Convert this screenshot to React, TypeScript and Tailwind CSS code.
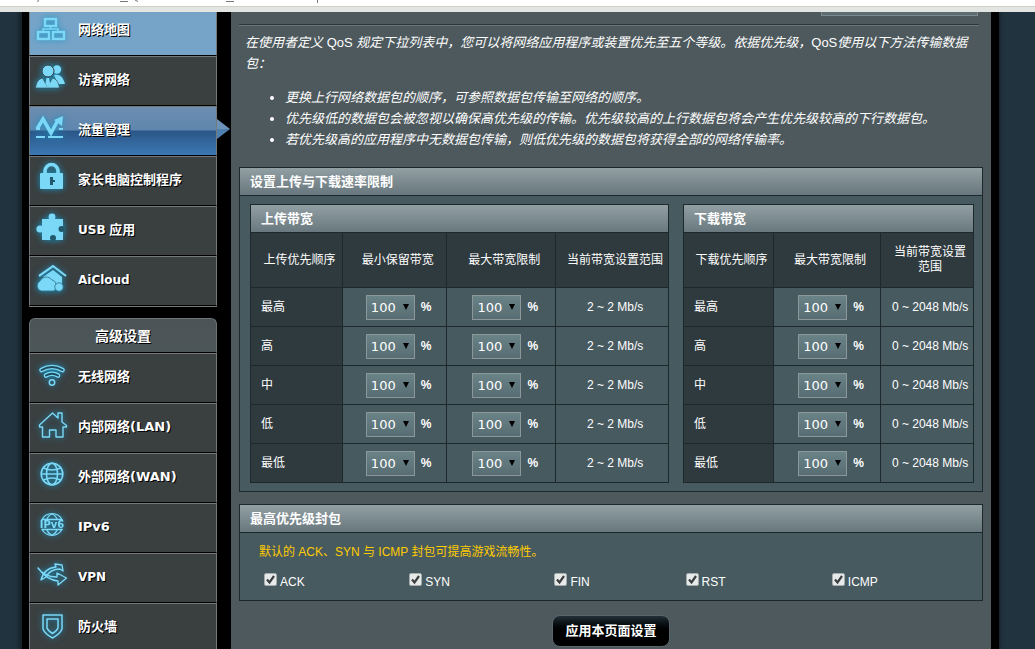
import { useState, type ReactNode } from 'react';
import clsx from 'clsx';

type MenuItem = {
  label: ReactNode;
  icon: ReactNode;
  state?: 'hover' | 'active';
};

const C = '#7bd8f6';
const DARK = '#3a3f40';

const icons = {
  map: (
    <g fill="none" stroke={C} strokeWidth="2.4">
      <rect x="10" y="4" width="11" height="7" />
      <rect x="3" y="17" width="11" height="7" />
      <rect x="18" y="17" width="11" height="7" />
      <path d="M15.5 11v3M8 17v-3h15v3" strokeWidth="1.6" />
    </g>
  ),
  guest: (
    <g fill={C}>
      <circle cx="22" cy="4.5" r="4.2" />
      <path d="M19 10c6-1 9 2 11 9h-7z" />
      <circle cx="13" cy="6" r="6" stroke={DARK} strokeWidth="1" />
      <path
        d="M.5 23c1-6 3-9 7-10l5 9 5-9c4 1 6 4 7 10z"
        stroke={DARK}
        strokeWidth=".6"
      />
      <path d="M11.5 13h2.600l1 6-2.300 3.500-2.300-3.500z" />
    </g>
  ),
  traffic: (
    <g fill="none" stroke={C}>
      <path d="M2 14 8 4l8 14 7-13" strokeWidth="3.6" />
      <path d="m19 5 9-4-1 10z" fill={C} stroke="none" />
      <path d="M1 14h4M24 14h4M1 22h9M13 22h15" strokeWidth="2.200" />
    </g>
  ),
  lock: (
    <g>
      <path d="M10 9V6a6.500 6.500 0 0 1 13 0v3" fill="none" stroke={C} strokeWidth="3.600" />
      <rect x="5" y="8" width="23" height="16" rx="1" fill={C} />
      <path d="M15 12h3v3h2v2h-2v3h-3z" fill="#23586b" />
    </g>
  ),
  usb: (
    <g>
      <path d="M7 4h21v21H7z" fill={C} />
      <circle cx="17" cy="2" r="3.400" fill={C} />
      <circle cx="5" cy="14" r="3.600" fill={C} />
      <circle cx="26.500" cy="14" r="3" fill="#23586b" />
      <circle cx="18" cy="23" r="3" fill="#23586b" />
    </g>
  ),
  cloud: (
    <g fill={C}>
      <path d="m4 11 14-10 13 10" fill="none" stroke={C} strokeWidth="2.200" />
      <path d="m8 12 10-7 9 7v8H8z" />
      <g stroke="#2b6f88" strokeWidth=".8">
        <path d="M6 26a5.500 5.500 0 0 1-1-10 7 7 0 0 1 12-1 5 5 0 0 1 4 6c0 3-1 5-3 5z" />
        <circle cx="24" cy="22" r="4.200" />
      </g>
    </g>
  ),
  wifi: (
    <g fill="none" strokeLinecap="round">
      <path d="M6.500 8q10.500-6 21 0M11 13.500q6-3.500 12 0" stroke={C} strokeWidth="4.600" />
      <path d="M6.500 8q10.500-6 21 0M11 13.500q6-3.500 12 0" stroke="#1d4b5c" strokeWidth="2" />
      <circle cx="17" cy="20.500" r="2.700" stroke={C} strokeWidth="1.500" />
    </g>
  ),
  lan: (
    <path
      d="M4.500 13 17.500 1 23 6V1h4v9l4.500 3.500v1.500H28v10h-7v-7h-6.500v7H7.500V15h-3z"
      fill="none"
      stroke={C}
      strokeWidth="1.400"
      strokeLinejoin="round"
    />
  ),
  wan: (
    <g fill="none" stroke={C} strokeWidth="1.600">
      <circle cx="17" cy="12" r="10.800" />
      <ellipse cx="17" cy="12" rx="5.500" ry="10.800" />
      <path d="M6.500 12h21M8.500 6q8.500 4 17 0M8.500 18q8.500-4 17 0" />
    </g>
  ),
  ipv6: (
    <g fill="none" stroke={C} strokeWidth="1.300">
      <path d="M7 7.500a11.500 11.500 0 0 1 20 0zM7 17.500a11.500 11.500 0 0 0 20 0z" />
      <path d="M12 7.500q1-4 5-5.500 4 1.500 5 5.500M12 17.500q1 4 5 5.500 4-1.500 5-5.500" />
      <text
        x="17"
        y="16"
        textAnchor="middle"
        fill={C}
        stroke="none"
        className="text-[10px] font-['DejaVu_Sans'] [text-shadow:none]"
      >
        IPv6
      </text>
    </g>
  ),
  vpn: (
    <g fill="none" stroke={C} strokeWidth="1.400" strokeLinejoin="round">
      <path d="M3 6q6 9 19 9v-4l9.500 5-8.500 7v-4q-11-1-20-13z" />
      <path d="M6 18q3-12 15-13l-1-3 7 1 1 6-3-2q-10 0-14 8z" />
    </g>
  ),
  firewall: (
    <g fill="none" stroke={C} strokeWidth="1.500" strokeLinejoin="round">
      <path d="M8 3h19v14q-2 5-9.500 9Q10 22 8 17z" />
      <path d="M12 7h11v9q-1 3-5.500 5.500Q13 19 12 16z" />
    </g>
  ),
};

const latin = "text-xs font-['DejaVu_Sans']";
const latinWide = "font-['DejaVu_Sans']";

const generalMenu: MenuItem[] = [
  { label: '网络地图', icon: icons.map, state: 'hover' },
  { label: '访客网络', icon: icons.guest },
  { label: '流量管理', icon: icons.traffic, state: 'active' },
  { label: '家长电脑控制程序', icon: icons.lock },
  {
    label: (
      <>
        <span className={latin}>USB</span> 应用
      </>
    ),
    icon: icons.usb,
  },
  { label: <span className={latin}>AiCloud</span>, icon: icons.cloud },
];

const advancedMenu: MenuItem[] = [
  { label: '无线网络', icon: icons.wifi },
  {
    label: (
      <>
        内部网络<span className={latinWide}>(LAN)</span>
      </>
    ),
    icon: icons.lan,
  },
  {
    label: (
      <>
        外部网络<span className={latinWide}>(WAN)</span>
      </>
    ),
    icon: icons.wan,
  },
  { label: <span className={latinWide}>IPv6</span>, icon: icons.ipv6 },
  { label: <span className={latin}>VPN</span>, icon: icons.vpn },
  { label: '防火墙', icon: icons.firewall },
];

const levels = ['最高', '高', '中', '低', '最低'];
const packets = ['ACK', 'SYN', 'FIN', 'RST', 'ICMP'];

function Menu({ items }: { items: MenuItem[] }) {
  return (
    <ul>
      {items.map((item, i) => (
        <li
          key={i}
          className={clsx(
            'relative h-[50px] border border-t-[#74797b] border-x-[#74797b] border-b-black',
            item.state === 'hover' && 'bg-[#76a4c8]',
            item.state === 'active' &&
              'bg-[linear-gradient(#6c8db0,#5f86ae_48%,#2b5687_50%,#3c78b4)]',
            !item.state && 'bg-[#3a3f40]',
          )}
        >
          <a
            href="#"
            className="flex h-full items-center gap-[11px] pl-[5px] text-[13px] font-bold text-white [text-shadow:1px_1px_0_#000]"
          >
            <svg
              viewBox="0 0 32 32"
              className="size-8 overflow-visible drop-shadow-[0_0_3px_#1795c4]"
              aria-hidden="true"
            >
              {item.icon}
            </svg>
            <span className="pb-0.5">{item.label}</span>
          </a>
          {item.state === 'active' && (
            <svg
              viewBox="0 0 13 20"
              className="absolute left-full top-3 ml-px h-5 w-[13px]"
              aria-hidden="true"
            >
              <path d="M0 0 13 10H0z" fill="#6c92b8" />
              <path d="M0 20 13 10H0z" fill="#4f7fae" />
            </svg>
          )}
        </li>
      ))}
    </ul>
  );
}

function PercentSelect({ label }: { label: string }) {
  const [value, setValue] = useState('100');

  return (
    <div className="flex items-center justify-center gap-1.5">
      <div className="relative">
        <select
          aria-label={label}
          value={value}
          onChange={(e) => setValue(e.target.value)}
          className="block h-[25px] w-[49px] appearance-none border border-[#8b9799] bg-linear-to-b from-[#6a8387] to-[#576d73] pl-1 text-[13px] text-white font-['DejaVu_Sans']"
        >
          {['100', '80', '60', '40', '20', '5'].map((n) => (
            <option key={n}>{n}</option>
          ))}
        </select>
        <svg
          viewBox="0 0 6 6"
          className="pointer-events-none absolute right-1.5 top-[9px] size-1.5"
          aria-hidden="true"
        >
          <path d="M0 0h6L3 6z" />
        </svg>
      </div>
      <span className="font-bold">%</span>
    </div>
  );
}

type BandwidthTableProps = {
  title: string;
  widths: string[];
  heads: string[];
  range: string;
};

function BandwidthTable({ title, widths, heads, range }: BandwidthTableProps) {
  return (
    <table className="w-full table-fixed border-collapse text-center text-xs leading-[15px] text-white [&_td]:border [&_td]:border-[#1d282c] [&_th]:border [&_th]:border-[#1d282c]">
      <colgroup>
        {widths.map((width, i) => (
          <col key={i} className={width} />
        ))}
      </colgroup>
      <thead>
        <tr className="h-7 bg-linear-to-b from-[#92a0a4] to-[#68777d]">
          <th colSpan={heads.length} className="pl-2.5 text-left text-[13px] font-bold">
            {title}
          </th>
        </tr>
        <tr className="h-[55px] bg-[#2f3a3e]">
          {heads.map((head) => (
            <th key={head} className="pl-2.5 pr-1 font-normal">
              {head}
            </th>
          ))}
        </tr>
      </thead>
      <tbody>
        {levels.map((level) => (
          <tr key={level} className="h-[39px] bg-[#475a5f]">
            <th className="bg-[#2f3a3e] pl-2.5 text-left font-normal">{level}</th>
            {heads.slice(1, -1).map((head) => (
              <td key={head} className="pl-2">
                <PercentSelect label={`${level} ${head}`} />
              </td>
            ))}
            <td className="whitespace-nowrap pl-2.5 pr-1">{range}</td>
          </tr>
        ))}
      </tbody>
    </table>
  );
}

function Panel({ title, children }: { title: string; children: ReactNode }) {
  return (
    <section className="border border-[#1d282c] bg-[#475a5f]">
      <h2 className="flex h-7 items-center border-b border-[#1d282c] bg-linear-to-b from-[#92a0a4] to-[#68777d] pl-2.5 text-[13px] font-bold text-white">
        {title}
      </h2>
      {children}
    </section>
  );
}

function PacketCheckbox({ name }: { name: string }) {
  return (
    <label className="flex items-start gap-[3px] text-xs">
      <span className="relative block">
        <input
          type="checkbox"
          defaultChecked
          className="peer block size-[13px] appearance-none rounded-xs border border-[#a5adaf] bg-[#e8e9e9]"
        />
        <svg
          viewBox="0 0 13 13"
          className="pointer-events-none absolute inset-0 hidden size-[13px] peer-checked:block"
          aria-hidden="true"
        >
          <path d="m3 6.500 2.500 3 4.500-6.500" fill="none" stroke="#3a3f42" strokeWidth="2.200" />
        </svg>
      </span>
      <span className="pt-px">{name}</span>
    </label>
  );
}

export default function App() {
  return (
    <div
      lang="zh-CN"
      className="flex h-screen flex-col overflow-hidden bg-[#21333e] font-['Liberation_Sans','Noto_Sans_CJK_SC',sans-serif]"
    >
      <div className="h-3 shrink-0 border-b-[5px] border-[#e3e5e3] bg-white">
        <div className="h-[7px] border-b border-[#d3ccc5]">
          <svg viewBox="0 0 330 6" className="h-1.5 w-[330px]" aria-hidden="true">
            <path
              d="M38.500 0l-.8 2M120 1.500h8M135 0l3 1.500M226 1.500h8M317.500 0v3"
              fill="none"
              stroke="#777"
            />
          </svg>
        </div>
      </div>

      <div className="flex min-h-0 flex-1 overflow-hidden pl-5 pr-9">
        <div className="flex flex-1 border-l-2 border-[#18242b] bg-black pr-2 shadow-[0_0_4px_#0b1419]">
          <aside className="-mt-1.5 ml-[7px] w-[188px] shrink-0">
            <div className="border-b border-[#74797b]">
              <Menu items={generalMenu} />
            </div>
            <h2 className="mt-[11px] flex h-[35px] items-center justify-center rounded-t-md border border-[#6d7577] border-b-black bg-linear-to-b from-[#4b5356] to-[#4d5659] text-sm font-bold text-white [text-shadow:1px_1px_0_#000]">
              高级设置
            </h2>
            <Menu items={advancedMenu} />
          </aside>

          <main className="ml-3.5 min-w-0 flex-1 bg-[#4d595d] px-2">
            <div className="ml-auto mr-[5px] h-1 w-[157px] border border-t-0 border-[#7c8a8e] bg-[#5c6c71]" />
            <hr className="mr-1 mt-2 h-0.5 border-b border-t border-b-[#6b767a] border-t-[#2b373c]" />

            <div className="px-1.5 pt-1.5 text-[13px] italic leading-[21px] text-white">
              <p>
                在使用者定义 <span className="not-italic">QoS</span>{' '}
                规定下拉列表中，您可以将网络应用程序或装置优先至五个等级。依据优先级，
                <span className="not-italic">QoS</span>使用以下方法传输数据包：
              </p>
              <ul className="mt-[13px] list-disc pl-10">
                <li>更换上行网络数据包的顺序，可参照数据包传输至网络的顺序。</li>
                <li>
                  优先级低的数据包会被忽视以确保高优先级的传输。优先级较高的上行数据包将会产生优先级较高的下行数据包。
                </li>
                <li>若优先级高的应用程序中无数据包传输，则低优先级的数据包将获得全部的网络传输率。</li>
              </ul>
            </div>

            <div className="mt-[17px] flex flex-col gap-3">
              <Panel title="设置上传与下载速率限制">
                <div className="grid grid-cols-[419fr_291fr] gap-3.5 px-2.5 py-2 pr-2">
                  <BandwidthTable
                    title="上传带宽"
                    widths={['w-[22%]', 'w-[25%]', 'w-[26%]', 'w-[27%]']}
                    heads={['上传优先顺序', '最小保留带宽', '最大带宽限制', '当前带宽设置范围']}
                    range="2 ~ 2 Mb/s"
                  />
                  <BandwidthTable
                    title="下载带宽"
                    widths={['w-[31%]', 'w-[37%]', 'w-[32%]']}
                    heads={['下载优先顺序', '最大带宽限制', '当前带宽设置范围']}
                    range="0 ~ 2048 Mb/s"
                  />
                </div>
              </Panel>

              <Panel title="最高优先级封包">
                <div className="px-[19px] pb-2.5 pt-2.5 text-white">
                  <p className="text-xs leading-[18px] text-[#fc0]">
                    默认的 ACK、SYN 与 ICMP 封包可提高游戏流畅性。
                  </p>
                  <div className="mt-3 grid grid-cols-[145fr_145fr_131fr_146fr_131fr] pl-[5px]">
                    {packets.map((name) => (
                      <PacketCheckbox key={name} name={name} />
                    ))}
                  </div>
                </div>
              </Panel>
            </div>

            <div className="mt-3.5 flex justify-center">
              <button
                type="button"
                className="h-8 w-[118px] rounded-lg border border-[#59656a] bg-linear-to-b from-[#223036] to-black to-60% text-[13px] font-bold text-white"
              >
                应用本页面设置
              </button>
            </div>
          </main>
        </div>
      </div>
    </div>
  );
}
